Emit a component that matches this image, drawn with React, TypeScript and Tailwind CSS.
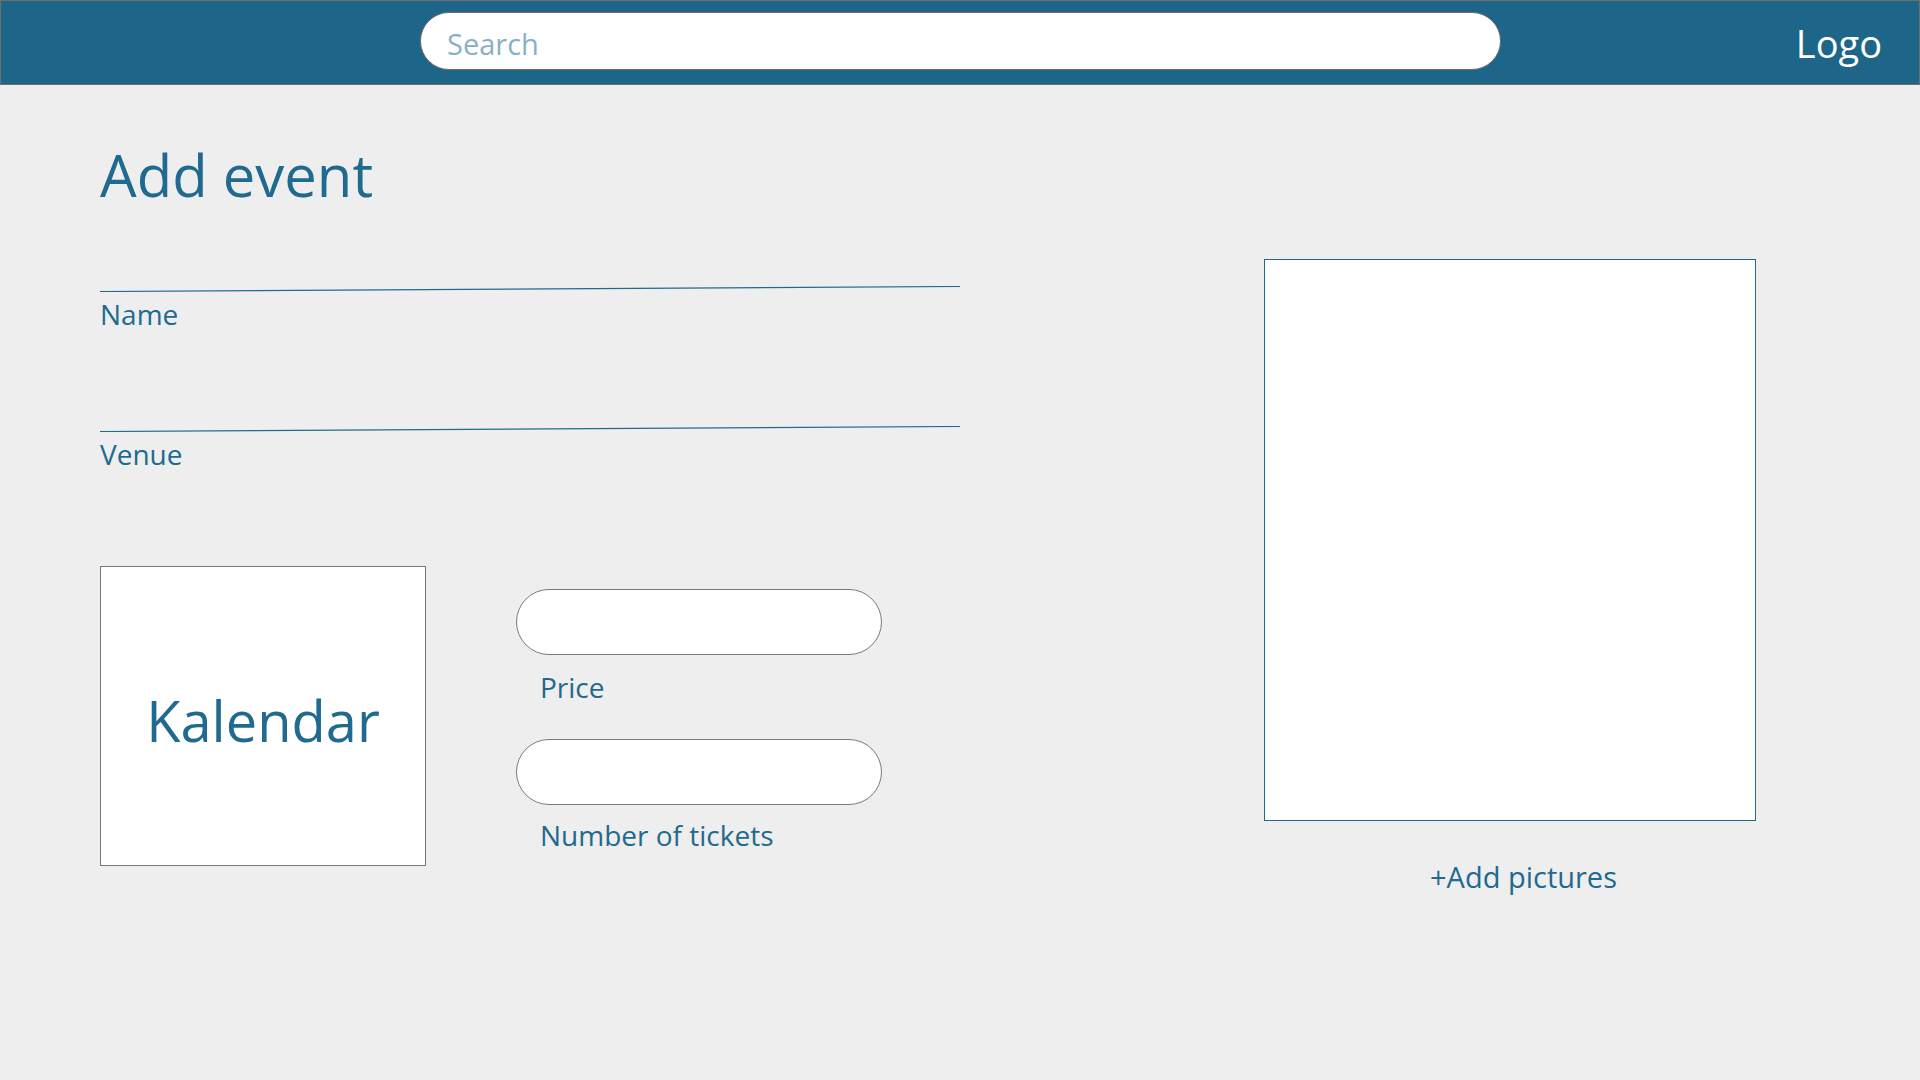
const FONT = { fontFamily: '"Open Sans", "Noto Sans", sans-serif' }

function SlantLine() {
  // underline in the mockup is drawn slightly askew
  return (
    <svg width="860" height="6" viewBox="0 0 860 6" className="block">
      <line x1="0" y1="5.5" x2="860" y2="0.5" stroke="#1f6a8e" strokeWidth="1.2" />
    </svg>
  )
}

function Field({ label, first }: { label: string; first?: boolean }) {
  return (
    <div className={first ? 'mt-[82px]' : 'mt-[98px]'}>
      <SlantLine />
      <div className="mt-[8px] text-[28px] leading-none text-[#1f6a8e]">{label}</div>
    </div>
  )
}

function PillInput({ label, first }: { label: string; first?: boolean }) {
  return (
    <div className={first ? 'mt-[23px]' : 'mt-[38px]'}>
      <input
        type="text"
        className="block w-[366px] h-[66px] rounded-full border border-[#7a7a7a] bg-white px-6 outline-none"
      />
      <div className={`${first ? 'mt-[18px]' : 'mt-[16px]'} pl-[24px] text-[28px] leading-none text-[#1f6a8e]`}>{label}</div>
    </div>
  )
}

export default function App() {
  return (
    <div className="min-h-screen w-full bg-[#eeeeee]" style={FONT}>
      <header className="flex h-[85px] items-start border border-[#6e6e6e] bg-[#1d6689]">
        <input
          type="text"
          placeholder="Search"
          className="ml-[419px] mt-[11px] h-[58px] w-[1081px] rounded-full border border-[#6e6e6e] bg-white pl-[26px] pt-[5px] text-[29px] text-[#1f6a8e] outline-none placeholder:text-[#8ab0c6]"
        />
        <div className="ml-auto mr-[37px] mt-[23px] text-[38px] leading-none text-white">Logo</div>
      </header>

      <main className="flex pl-[100px]">
        <div className="w-[860px]">
          <h1 className="mt-[61px] text-[58px] leading-none font-normal text-[#1f6a8e]">Add event</h1>
          <Field label="Name" first />
          <Field label="Venue" />

          <div className="mt-[98px] flex">
            <div className="flex h-[300px] w-[326px] items-center justify-center border border-[#777777] bg-white">
              <span className="mt-[8px] text-[56px] leading-none text-[#1f6a8e]">Kalendar</span>
            </div>
            <div className="ml-[90px]">
              <PillInput label="Price" first />
              <PillInput label="Number of tickets" />
            </div>
          </div>
        </div>

        <div className="ml-[304px] pt-[174px]">
          <div className="h-[562px] w-[492px] border border-[#1f6a8e] bg-white" />
          <div className="mt-[41px] pl-[166px] text-[29px] leading-none text-[#1f6a8e]">+Add pictures</div>
        </div>
      </main>
    </div>
  )
}
